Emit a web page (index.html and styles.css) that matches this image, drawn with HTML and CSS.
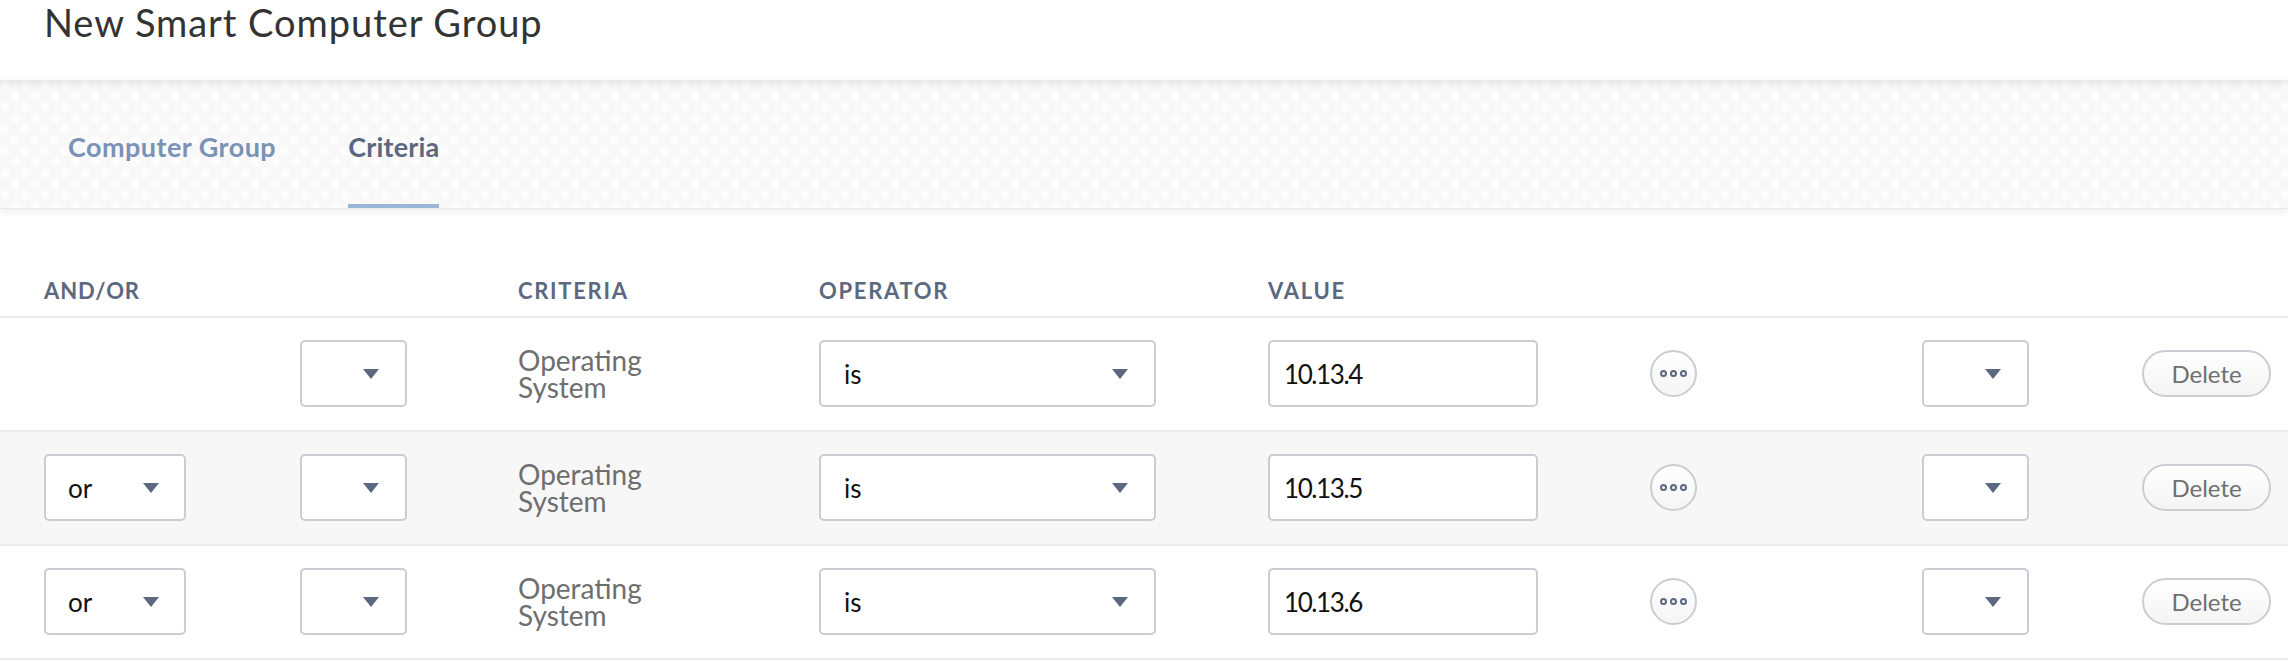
FILE: index.html
```html
<!DOCTYPE html>
<html lang="en">
<head>
<meta charset="utf-8">
<title>New Smart Computer Group</title>
<link rel="stylesheet" href="styles.css">
</head>
<body>
<header class="page-head"><h1 class="page-title">New Smart Computer Group</h1></header>
<nav class="tabs">
  <a class="tab">Computer Group</a>
  <a class="tab tab-active">Criteria</a>
</nav>
<main class="criteria">
  <div class="row row-head">
    <div class="th th-tight">AND/OR</div><div></div>
    <div class="th">CRITERIA</div>
    <div class="th">OPERATOR</div>
    <div class="th">VALUE</div>
  </div>
  <div class="row">
    <div></div>
    <div class="select sel-paren"><span></span><i class="caret"></i></div>
    <div class="crit">Operating<br>System</div>
    <div class="select sel-op"><span>is</span><i class="caret"></i></div>
    <div class="value">10.13.4</div>
    <button class="more"><i></i><i></i><i></i></button>
    <div class="select sel-paren"><span></span><i class="caret"></i></div>
    <button class="del">Delete</button>
  </div>
  <div class="row row-alt">
    <div class="select sel-and"><span>or</span><i class="caret"></i></div>
    <div class="select sel-paren"><span></span><i class="caret"></i></div>
    <div class="crit">Operating<br>System</div>
    <div class="select sel-op"><span>is</span><i class="caret"></i></div>
    <div class="value">10.13.5</div>
    <button class="more"><i></i><i></i><i></i></button>
    <div class="select sel-paren"><span></span><i class="caret"></i></div>
    <button class="del">Delete</button>
  </div>
  <div class="row">
    <div class="select sel-and"><span>or</span><i class="caret"></i></div>
    <div class="select sel-paren"><span></span><i class="caret"></i></div>
    <div class="crit">Operating<br>System</div>
    <div class="select sel-op"><span>is</span><i class="caret"></i></div>
    <div class="value">10.13.6</div>
    <button class="more"><i></i><i></i><i></i></button>
    <div class="select sel-paren"><span></span><i class="caret"></i></div>
    <button class="del">Delete</button>
  </div>
</main>
</body>
</html>
```
FILE: styles.css
```css
* { box-sizing: border-box; }
html, body { margin: 0; padding: 0; }
body {
  width: 2288px;
  height: 662px;
  overflow: hidden;
  background: #fff;
  font-family: "Lato", "Liberation Sans", sans-serif;
}
.page-head {
  height: 80px;
  padding-left: 44px;
}
.page-title {
  margin: 0;
  font-size: 38px;
  font-weight: 400;
  line-height: 44px;
  color: #333;
  letter-spacing: 0.95px;
}
.tabs {
  position: relative;
  display: flex;
  gap: 72px;
  height: 128px;
  padding-left: 68px;
  background-color: #f8f8f8;
  background-image:
    linear-gradient(rgba(0,0,0,.07), rgba(0,0,0,0) 10px),
    radial-gradient(circle at 5px 5px, #fdfdfd 0 4px, transparent 5px),
    radial-gradient(circle at 15px 16px, #fdfdfd 0 4px, transparent 5px);
  background-size: 100% 100%, 20px 22px, 20px 22px;
  box-shadow: 0 1px 0 #e9e9ee, 0 3px 8px rgba(60,60,90,.1);
}
.tab {
  display: flex;
  align-items: center;
  height: 128px;
  padding-top: 4px;
  font-size: 27px;
  font-weight: 700;
  letter-spacing: 0.45px;
  color: #7a92b6;
}
.tab-active {
  color: #5c6880;
  position: relative;
  letter-spacing: 0.2px;
}
.tab-active::after {
  content: "";
  position: absolute;
  left: 0;
  right: 0;
  bottom: 0;
  height: 4px;
  background: #9bb5d6;
}
.criteria {
  padding-top: 72px;
}
.row {
  display: grid;
  grid-template-columns: 256px 218px 301px 449px 382px 272px 220px 1fr;
  align-items: center;
  height: 114px;
  padding-left: 44px;
  padding-bottom: 1px;
  border-bottom: 2px solid #e9ebef;
}
.row-head {
  height: 38px;
  padding-bottom: 0;
  align-items: start;
}
.row-alt { background: #f7f7f8; }
.th {
  font-size: 22px;
  line-height: 22px;
  font-weight: 700;
  letter-spacing: 1.7px;
  color: #5c6880;
}
.th-tight { letter-spacing: 0.9px; }
.select, .value {
  display: flex;
  align-items: center;
  height: 67px;
  background: #fff;
  border: 2px solid #c9cdd4;
  border-radius: 5px;
  font-size: 26px;
  color: #111;
}
.select { justify-content: space-between; padding: 0 24px 0 23px; }
.sel-and { width: 142px; padding: 0 25px 0 22px; }
.sel-paren { width: 107px; padding-right: 26px; }
.sel-op { width: 337px; padding-right: 26px; }
.value { width: 270px; padding-left: 14px; letter-spacing: -1.4px; }
.caret {
  width: 0;
  height: 0;
  border-left: 8px solid transparent;
  border-right: 8px solid transparent;
  border-top: 10px solid #5c6880;
}
.crit {
  font-size: 28px;
  line-height: 27px;
  color: #6e6e6e;
}
.more {
  display: flex;
  align-items: center;
  justify-content: center;
  gap: 3px;
  width: 47px;
  height: 47px;
  padding: 0;
  border: 2px solid #c9cdd4;
  border-radius: 50%;
  background: linear-gradient(#fff, #f5f5f6);
}
.more i {
  width: 7px;
  height: 7px;
  border: 2px solid #5c6880;
  border-radius: 50%;
}
.del {
  width: 129px;
  height: 47px;
  padding: 0;
  border: 2px solid #c9cdd4;
  border-radius: 24px;
  background: linear-gradient(#fff, #f4f4f5);
  font-family: inherit;
  font-size: 24px;
  color: #707070;
}
```
